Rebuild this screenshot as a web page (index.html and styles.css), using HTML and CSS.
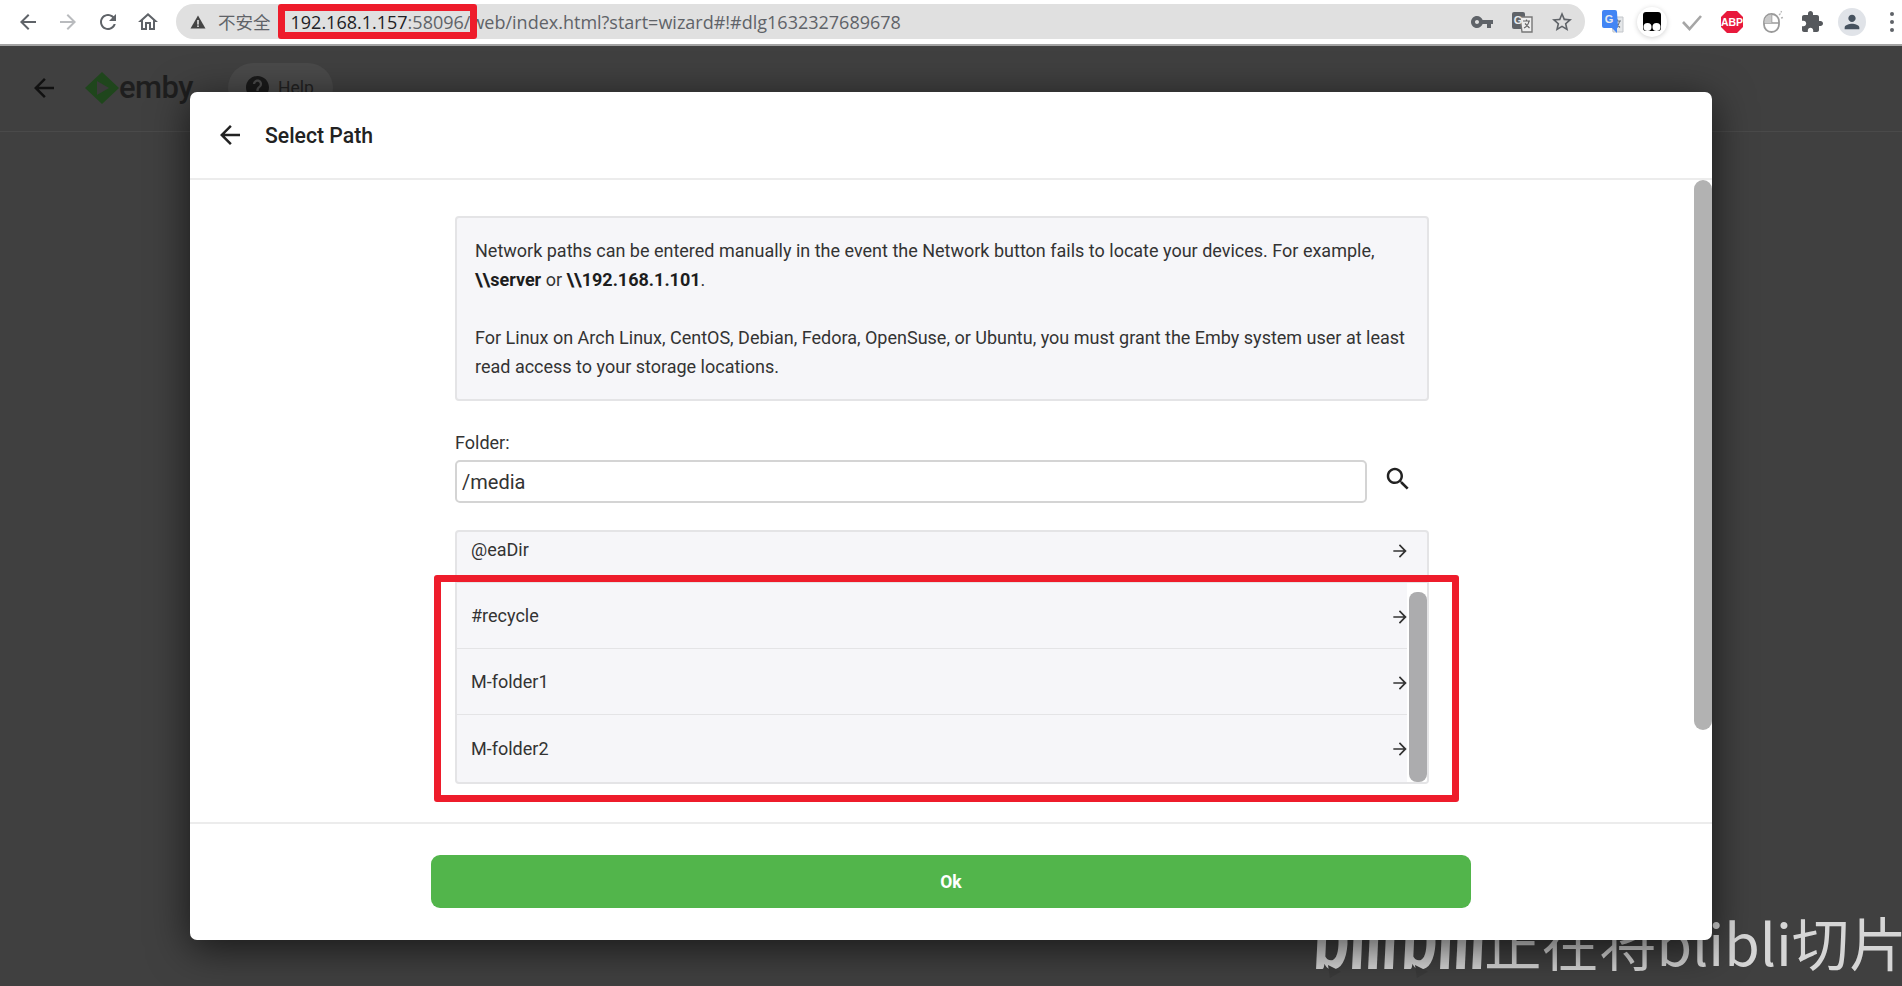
FILE: index.html
```html
<!DOCTYPE html>
<html lang="en">
<head>
<meta charset="utf-8">
<title>Select Path</title>
<link rel="stylesheet" href="styles.css">
</head>
<body>
<div class="toolbar">
  <svg class="tb-icon" viewBox="0 0 24 24"><path d="M20 11H7.830l5.590-5.590L12 4l-8 8 8 8 1.410-1.410L7.830 13H20v-2z"/></svg>
  <svg class="tb-icon tb-dim" viewBox="0 0 24 24"><path d="M4 13h12.170l-5.590 5.590L12 20l8-8-8-8-1.410 1.410L16.170 11H4v2z"/></svg>
  <svg class="tb-icon" viewBox="0 0 24 24"><path d="M17.650 6.350C16.200 4.900 14.210 4 12 4c-4.420 0-7.990 3.580-7.990 8s3.570 8 7.990 8c3.730 0 6.840-2.550 7.730-6h-2.080c-.82 2.330-3.040 4-5.650 4-3.310 0-6-2.690-6-6s2.690-6 6-6c1.660 0 3.140.69 4.220 1.780L13 11h7V4l-2.350 2.350z"/></svg>
  <svg class="tb-icon" viewBox="0 0 24 24"><path d="M12 5.690l5 4.500V18h-2v-6H9v6H7v-7.810l5-4.500M12 3L2 12h3v8h6v-6h2v6h6v-8h3L12 3z"/></svg>
  <div class="omnibox">
    <svg class="warn" viewBox="0 0 16 16"><path d="M8 1.500 15.500 14.500H.5z"/><rect x="7.200" y="6" width="1.600" height="4.600" fill="#e0e0e0"/><rect x="7.200" y="11.400" width="1.600" height="1.600" fill="#e0e0e0"/></svg>
    <span class="insecure">不安全</span>
    <span class="url"><span class="url-host">192.168.1.157</span>:58096/web/index.html?start=wizard#!#dlg1632327689678</span>
    <span class="omni-actions">
      <svg class="tb-icon" viewBox="0 0 24 24"><path d="M12.650 10C11.830 7.670 9.610 6 7 6c-3.310 0-6 2.690-6 6s2.690 6 6 6c2.610 0 4.830-1.670 5.650-4H17v4h4v-4h2v-4H12.650zM7 14c-1.100 0-2-.9-2-2s.9-2 2-2 2 .9 2 2-.9 2-2 2z"/></svg>
      <svg class="tb-icon" viewBox="0 0 24 24"><rect x="2" y="2" width="13" height="17" rx="2" fill="#5f6368"/><path d="M10 7h12v15H12z" fill="#eee" stroke="#777" stroke-width="1.400"/><path d="M13 11h7M16.500 9.500v1.500M14 18c3-1.500 4.500-3.500 5-7M15 13.500l4.500 4.500" stroke="#666" stroke-width="1.200" fill="none"/><text x="8" y="14" text-anchor="middle" class="icon-g">G</text></svg>
      <svg class="tb-icon" viewBox="0 0 24 24"><path d="M22 9.240l-7.190-.620L12 2 9.190 8.630 2 9.240l5.460 4.730L5.820 21 12 17.270 18.180 21l-1.630-7.030L22 9.240zM12 15.400l-3.760 2.270 1-4.280-3.320-2.880 4.380-.380L12 6.100l1.710 4.040 4.380.380-3.320 2.880 1 4.280L12 15.400z"/></svg>
    </span>
  </div>
  <div class="extensions">
    <svg class="ext" viewBox="0 0 24 24"><path d="M11 7h12v15H13z" fill="#e4e6e8" stroke="#c3c6ca"/><path d="M14 11h7M17.500 9.500V11M15 18c3-1.500 4-3.500 4.500-7M16 13.500l4 4" stroke="#6b7480" stroke-width="1.100" fill="none"/><path d="M4 0h11a2 2 0 0 1 2 2l1 15.500-1 .5v5l-5-5H4a2 2 0 0 1-2-2V2a2 2 0 0 1 2-2z" fill="#4285f4"/><text x="9" y="12.500" text-anchor="middle" class="icon-g">G</text></svg>
    <span class="monkey"><svg viewBox="0 0 18 20"><rect x="0" y="0" width="18" height="19" rx="3" fill="#000"/><circle cx="4.500" cy="15" r="4" fill="#fff"/><circle cx="13.500" cy="15" r="4" fill="#fff"/></svg></span>
    <svg class="ext" viewBox="0 0 24 24"><path d="M3 12l6.500 7L21 6" fill="none" stroke="#a6a6a6" stroke-width="2.600"/></svg>
    <span class="abp"><svg viewBox="0 0 24 24"><path d="M7 1h10l6 6v10l-6 6H7l-6-6V7z" fill="#e8193c"/><text x="12" y="16" text-anchor="middle" class="abp-text">ABP</text></svg></span>
    <svg class="ext" viewBox="0 0 24 24"><rect x="4" y="4" width="15" height="18" rx="7.500" fill="none" stroke="#9a9a9a" stroke-width="1.800"/><path d="M4 13h15M11.500 4v9" stroke="#9a9a9a" stroke-width="1.600"/><path d="M4.500 13v-1.500a7 7 0 0 1 7-7V13z" fill="#c9c9c9"/><path d="M19 5l1.500-1.500M21 8l2-.5M21 2.500l.5-1.500" stroke="#b5b5b5" stroke-width="1.300"/></svg>
    <svg class="ext ext-dark" viewBox="0 0 24 24"><path d="M20.500 11H19V7c0-1.100-.9-2-2-2h-4V3.500C13 2.120 11.880 1 10.500 1S8 2.120 8 3.500V5H4c-1.100 0-1.990.9-1.990 2v3.800H3.500c1.490 0 2.700 1.210 2.700 2.700s-1.210 2.700-2.700 2.700H2V20c0 1.100.9 2 2 2h3.800v-1.500c0-1.490 1.210-2.700 2.700-2.700 1.490 0 2.700 1.210 2.700 2.700V22H17c1.100 0 2-.9 2-2v-4h1.500c1.380 0 2.500-1.120 2.500-2.500S21.880 11 20.500 11z"/></svg>
    <span class="avatar"><svg viewBox="0 0 24 24"><path d="M12 12c2.210 0 4-1.790 4-4s-1.790-4-4-4-4 1.790-4 4 1.790 4 4 4zm0 2c-2.670 0-8 1.340-8 4v2h16v-2c0-2.660-5.330-4-8-4z"/></svg></span>
    <span class="dots"><i></i><i></i><i></i></span>
  </div>
</div>

<main class="page">
  <header class="app-header">
    <svg class="app-back" viewBox="0 0 24 24"><path d="M20 11H7.830l5.590-5.590L12 4l-8 8 8 8 1.410-1.410L7.830 13H20v-2z"/></svg>
    <svg class="emby-mark" viewBox="0 0 34 32"><path d="M17 0 34 16 17 32 0 16z" fill="#1f461c"/><path d="M12 9l12 7-12 7z" fill="#3a3a3a"/></svg>
    <span class="emby-word">emby</span>
    <span class="help-pill">
      <svg class="help-icon" viewBox="2 2 20 20"><path d="M12 2C6.480 2 2 6.480 2 12s4.480 10 10 10 10-4.480 10-10S17.520 2 12 2zm1 17h-2v-2h2v2zm2.070-7.750l-.9.920C13.450 12.900 13 13.500 13 15h-2v-.5c0-1.100.450-2.100 1.170-2.830l1.240-1.260c.370-.360.590-.860.590-1.410 0-1.100-.9-2-2-2s-2 .9-2 2H8c0-2.210 1.790-4 4-4s4 1.790 4 4c0 .880-.360 1.680-.930 2.250z"/></svg>
      Help
    </span>
  </header>

  <div class="watermark">
    <span class="wm-logo">bili</span>
    <span class="wm-logo wm-logo-b">bili</span>
    <svg class="wm-play wm-play-a" viewBox="0 0 14 14"><path d="M0 0l14 7-12 7z"/></svg>
    <svg class="wm-play wm-play-b" viewBox="0 0 14 14"><path d="M0 0l14 7-12 7z"/></svg>
    <span class="wm-text">正在将blibli切片</span>
  </div>

  <section class="dialog">
    <div class="dialog-head">
      <svg class="dialog-back" viewBox="0 0 24 24"><path d="M20 11H7.830l5.590-5.590L12 4l-8 8 8 8 1.410-1.410L7.830 13H20v-2z"/></svg>
      <h1 class="dialog-title">Select Path</h1>
    </div>
    <div class="dialog-body">
      <div class="content">
        <div class="info">
          <p>Network paths can be entered manually in the event the Network button fails to locate your devices. For example, <b>\\server</b> or <b>\\192.168.1.101</b>.</p>
          <p class="info-gap">For Linux on Arch Linux, CentOS, Debian, Fedora, OpenSuse, or Ubuntu, you must grant the Emby system user at least read access to your storage locations.</p>
        </div>
        <label class="field-label" for="folder">Folder:</label>
        <div class="field-row">
          <input class="field-input" id="folder" type="text" value="/media">
          <svg class="search-icon" viewBox="0 0 24 24"><path d="M15.500 14h-.79l-.28-.27C15.410 12.590 16 11.110 16 9.500 16 5.910 13.090 3 9.500 3S3 5.910 3 9.500 5.910 16 9.500 16c1.610 0 3.090-.59 4.230-1.570l.27.280v.79l5 4.990L20.490 19l-4.990-5zm-6 0C7.010 14 5 11.990 5 9.500S7.010 5 9.500 5 14 7.010 14 9.500 11.990 14 9.500 14z"/></svg>
        </div>
        <div class="list">
          <div class="rows">
            <div class="row"><span>@eaDir</span><svg class="row-arrow" viewBox="0 0 24 24"><path d="M4 13h12.170l-5.590 5.590L12 20l8-8-8-8-1.410 1.410L16.170 11H4v2z"/></svg></div>
            <div class="row"><span>#recycle</span><svg class="row-arrow" viewBox="0 0 24 24"><path d="M4 13h12.170l-5.590 5.590L12 20l8-8-8-8-1.410 1.410L16.170 11H4v2z"/></svg></div>
            <div class="row"><span>M-folder1</span><svg class="row-arrow" viewBox="0 0 24 24"><path d="M4 13h12.170l-5.590 5.590L12 20l8-8-8-8-1.410 1.410L16.170 11H4v2z"/></svg></div>
            <div class="row"><span>M-folder2</span><svg class="row-arrow" viewBox="0 0 24 24"><path d="M4 13h12.170l-5.590 5.590L12 20l8-8-8-8-1.410 1.410L16.170 11H4v2z"/></svg></div>
          </div>
          <div class="list-track"><div class="list-thumb"></div></div>
        </div>
      </div>
      <div class="body-thumb"></div>
    </div>
    <div class="dialog-foot">
      <button class="ok" type="button">Ok</button>
    </div>
  </section>
</main>

<div class="mark mark-url"></div>
<div class="mark mark-list"></div>
</body>
</html>
```
FILE: styles.css
```css
* { box-sizing: border-box; }
html, body { height: 100%; margin: 0; }
body {
  position: relative;
  display: flex;
  flex-direction: column;
  overflow: hidden;
  background: #404040;
  font-family: Roboto, "Noto Sans CJK SC", sans-serif;
  color: #2b2b2b;
}
.toolbar {
  flex: 0 0 46px;
  display: flex;
  align-items: center;
  padding: 4px 0 5px 16px;
  gap: 16px;
  background: #fff;
  border-bottom: 2px solid #a3a3a3;
}
.tb-icon { width: 24px; height: 24px; fill: #5f6368; flex: none; }
.tb-dim { fill: #b9bbbe; }
.icon-g { font: 700 11px "Liberation Sans", sans-serif; fill: #e8eaed; }
.omnibox {
  width: 1409px;
  height: 35px;
  flex: none;
  display: flex;
  align-items: center;
  padding: 0 11px 0 14px;
  background: #e0e0e0;
  border-radius: 18px;
}
.warn { width: 16px; height: 16px; fill: #444; flex: none; }
.insecure {
  margin-left: 12px;
  font-family: "Noto Sans CJK SC", sans-serif;
  font-size: 17.500px;
  color: #5f6368;
  white-space: nowrap;
}
.url {
  margin-left: 20px;
  font-family: "Open Sans", sans-serif;
  font-size: 18px;
  color: #5f6368;
  white-space: nowrap;
}
.url-host { color: #202124; }
.omni-actions { margin-left: auto; display: flex; gap: 16px; }
.extensions { margin-left: -1px; display: flex; gap: 16px; align-items: center; height: 35px; }
.ext { width: 24px; height: 24px; flex: none; }
.ext-dark { fill: #55585c; }
.monkey {
  width: 24px; height: 24px; flex: none;
  display: flex; align-items: center; justify-content: center;
  background: #fff;
  border-radius: 50%;
  box-shadow: 0 0 0 3px #fff, 0 1px 5px 3px rgba(0,0,0,.18);
}
.monkey svg { width: 18px; height: 20px; }
.abp { width: 24px; height: 24px; flex: none; }
.abp svg { display: block; width: 24px; height: 24px; }
.abp-text { font: 700 10.500px "Liberation Sans", sans-serif; fill: #fff; }
.avatar {
  width: 28px; height: 28px; margin: 0 -2px; flex: none;
  display: flex; align-items: center; justify-content: center;
  background: #e0e3e8;
  border-radius: 50%;
}
.avatar svg { width: 22px; height: 22px; fill: #46525f; }
.dots { width: 24px; flex: none; display: flex; flex-direction: column; align-items: center; gap: 4px; }
.dots i { width: 4px; height: 4px; border-radius: 50%; background: #5f6368; }

.page { position: relative; flex: 1; min-height: 0; }
.app-header {
  height: 86px;
  display: flex;
  align-items: center;
  padding: 0 0 2px 29px;
  border-bottom: 1px solid #4a4a4a;
  color: #1b1b1b;
}
.app-back { width: 30px; height: 30px; fill: #111; flex: none; }
.emby-mark { width: 34px; height: 32px; margin-left: 26px; flex: none; }
.emby-word {
  margin-left: 0;
  font-size: 31px;
  font-weight: 500;
  letter-spacing: -.5px;
  color: #1e1e1e;
}
.help-pill {
  display: flex;
  align-items: center;
  gap: 9px;
  height: 50px;
  width: 105px;
  margin-left: 35px;
  padding-left: 18px;
  background: #4a4a4a;
  border-radius: 25px;
  font-size: 17.500px;
  color: #222;
}
.help-icon { width: 23px; height: 23px; fill: #1a1a1a; flex: none; }

.watermark { position: absolute; inset: 0; overflow: hidden; }
.wm-logo {
  position: absolute;
  left: 1312px;
  top: 842px;
  font-family: Lato, sans-serif;
  font-size: 92px;
  font-weight: 900;
  line-height: 92px;
  color: #d6d6d6;
  white-space: nowrap;
  transform: scaleX(.68) skewX(-4deg);
  transform-origin: left bottom;
}
.wm-logo-b { left: 1400px; }
.wm-play { position: absolute; width: 13px; height: 13px; fill: #3a3a3a; }
.wm-play-a { left: 1328px; top: 919px; }
.wm-play-b { left: 1415px; top: 919px; }
.wm-text {
  position: absolute;
  left: 1484px;
  top: 860px;
  font-family: "Noto Sans CJK SC", sans-serif;
  font-size: 57.500px;
  font-weight: 400;
  line-height: 70px;
  color: #d6d6d6;
  white-space: nowrap;
}

.dialog {
  position: absolute;
  left: 190px;
  top: 46px;
  width: 1522px;
  height: 848px;
  display: flex;
  flex-direction: column;
  background: #fff;
  border-radius: 7px;
  overflow: hidden;
  box-shadow: 0 8px 40px rgba(0,0,0,.65);
}
.dialog-head {
  flex: 0 0 88px;
  display: flex;
  align-items: center;
  gap: 20px;
  padding-left: 25px;
  border-bottom: 2px solid #ececec;
}
.dialog-back { width: 30px; height: 30px; fill: #222; flex: none; }
.dialog-title { margin: 0; font-size: 21.200px; font-weight: 500; color: #222; }
.dialog-body { position: relative; flex: 1; min-height: 0; padding: 36px 0 0 265px; }
.content { width: 974px; }
.info {
  height: 185px;
  padding: 18px 18px;
  background: #f6f6f9;
  border: 2px solid #e4e4e6;
  border-radius: 4px;
  font-size: 18px;
  line-height: 29px;
  color: #333;
}
.info p { margin: 0; }
.info .info-gap { margin-top: 29px; }
.info b { color: #1d1d1d; font-weight: 700; }
.field-label {
  display: block;
  margin-top: 30px;
  margin-bottom: 5px;
  font-size: 18px;
  line-height: 24px;
  color: #333;
}
.field-row { display: flex; align-items: flex-start; height: 43px; }
.field-input {
  width: 912px;
  height: 43px;
  padding: 0 5px;
  background: #fff;
  border: 2px solid #d4d4d4;
  border-radius: 5px;
  font-family: Roboto, sans-serif;
  font-size: 20px;
  color: #333;
  outline: none;
}
.search-icon { width: 30px; height: 30px; margin: 4px 0 0 16px; fill: #222; flex: none; }
.list {
  position: relative;
  height: 254px;
  margin-top: 27px;
  background: #f6f6f9;
  border: 2px solid #e4e4e6;
  border-radius: 4px;
  overflow: hidden;
  font-size: 18px;
  color: #333;
}
.rows { margin-top: -15px; }
.row {
  height: 66px;
  display: flex;
  align-items: center;
  justify-content: space-between;
  padding: 0 17px 0 14px;
  border-bottom: 1px solid #e4e4e6;
}
.row:last-child { border-bottom: 0; }
.row-arrow { width: 20px; height: 20px; margin-top: 2px; fill: #333; flex: none; }
.list-track {
  position: absolute;
  right: 0;
  top: 51px;
  bottom: 0;
  width: 20px;
  padding: 9px 0 0 2px;
  background: #fff;
}
.list-thumb { height: 190px; background: #acacae; border-radius: 8px; }
.body-thumb {
  position: absolute;
  right: 0;
  top: 0;
  width: 18px;
  height: 550px;
  background: #b2b2b2;
  border-radius: 9px;
}
.dialog-foot {
  flex: 0 0 118px;
  padding: 31px 0 0 241px;
  border-top: 2px solid #ececec;
}
.ok {
  display: block;
  width: 1040px;
  height: 53px;
  padding: 0;
  border: 0;
  border-radius: 9px;
  background: #52b54b;
  color: #fff;
  font-family: Roboto, sans-serif;
  font-size: 17.500px;
  font-weight: 700;
}

.mark { position: absolute; border: 7px solid #ee1c2b; border-radius: 3px; }
.mark-url { left: 278px; top: 4px; width: 199px; height: 35px; }
.mark-list { left: 434px; top: 575px; width: 1025px; height: 227px; }
```
